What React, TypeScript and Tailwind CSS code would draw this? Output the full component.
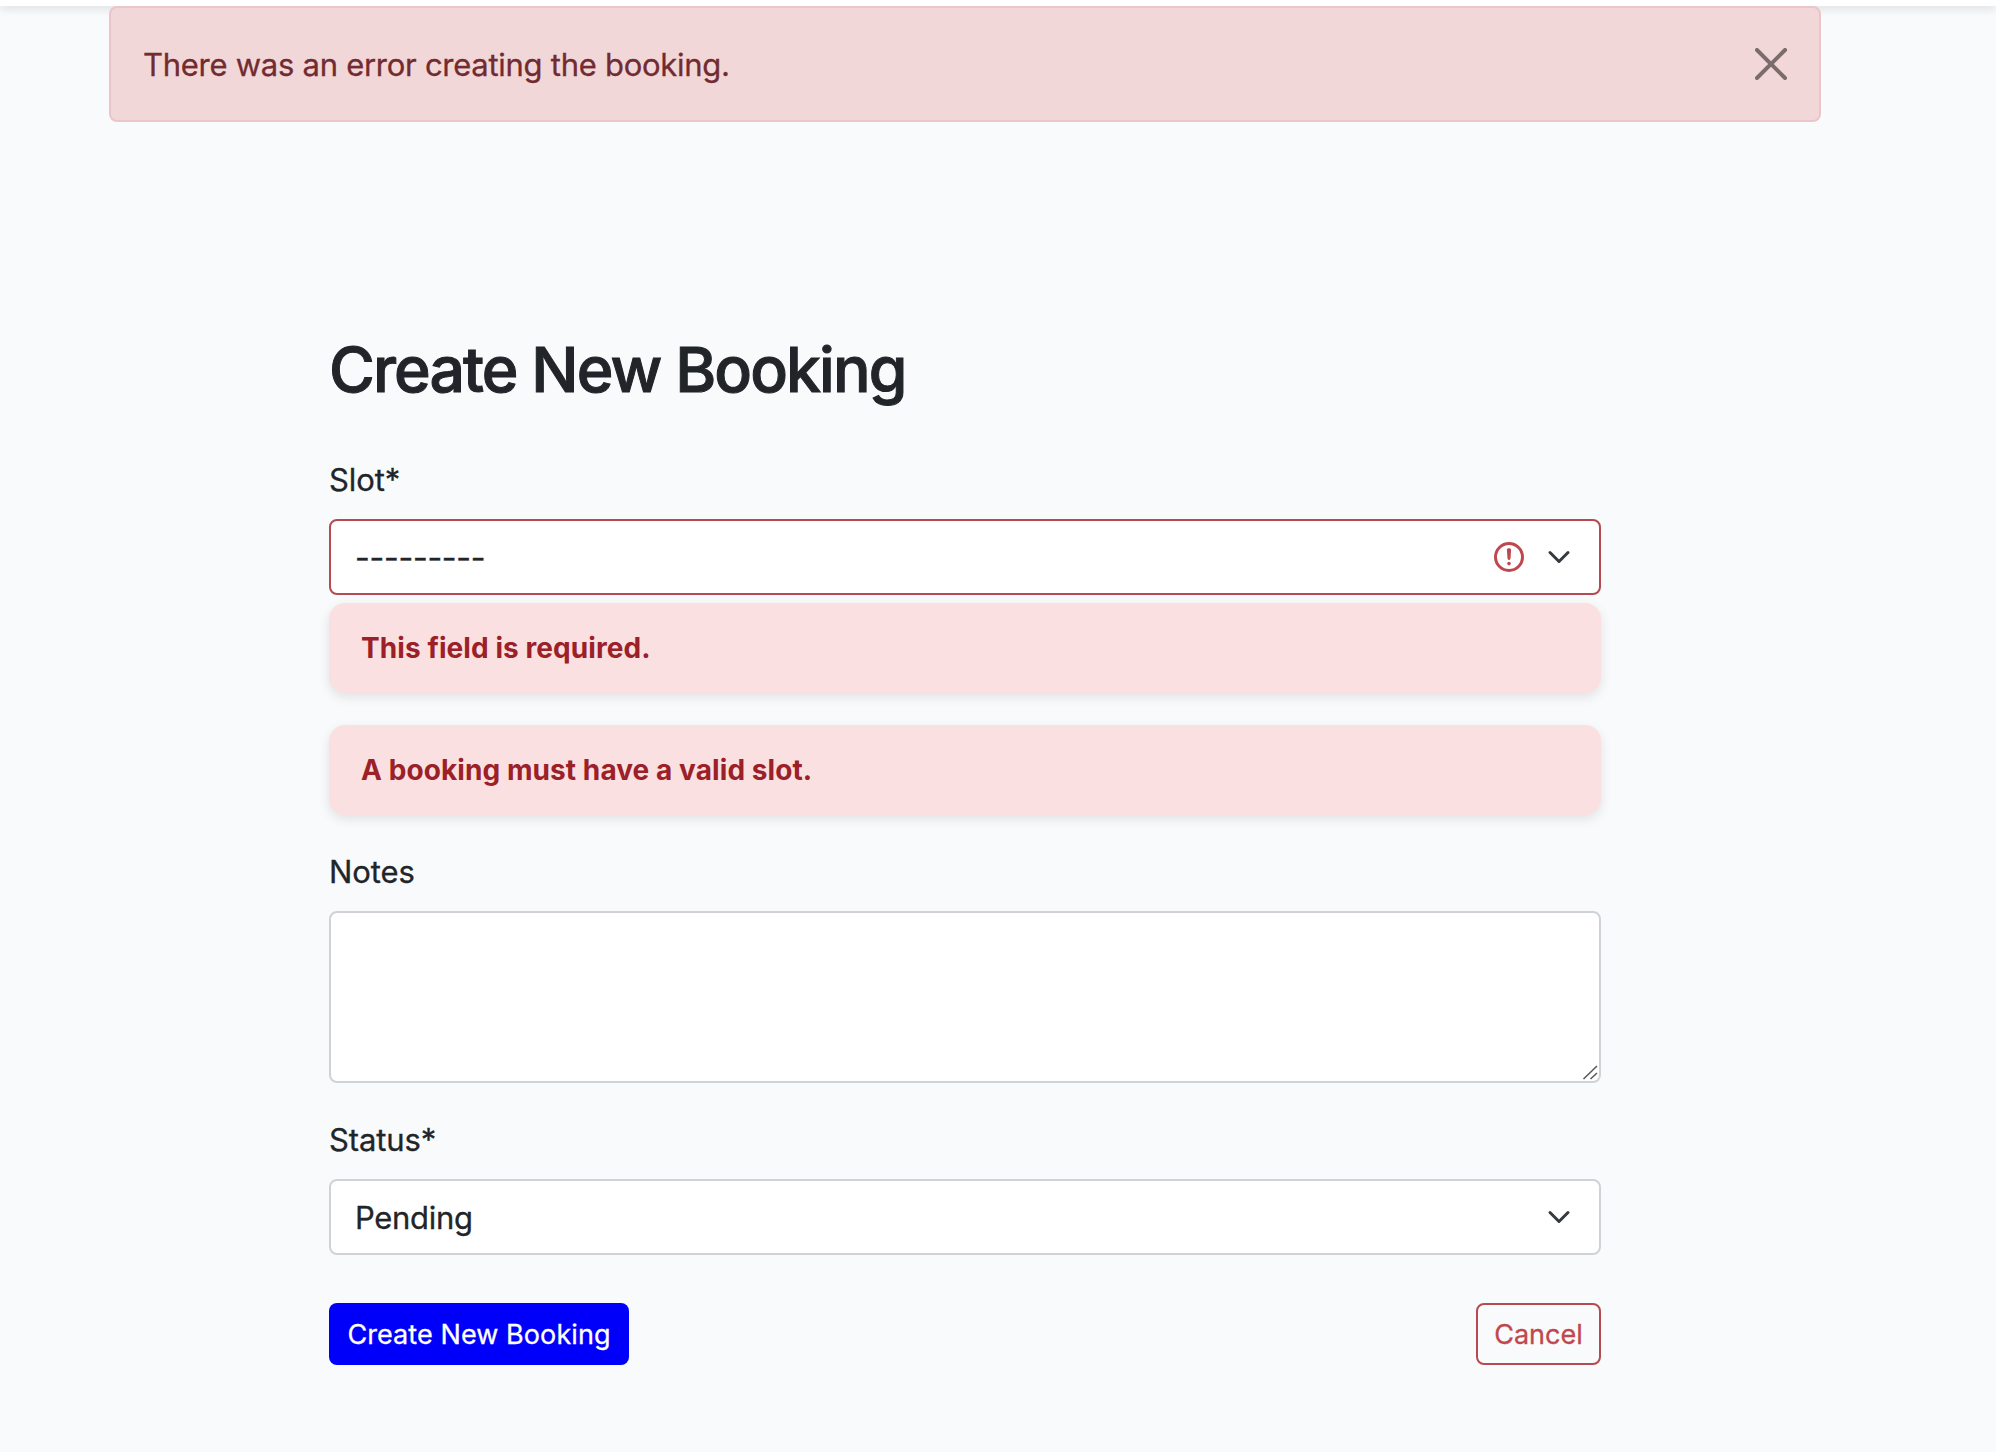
import React from "react";

const Chevron = () => (
  <svg className="h-6 w-8 shrink-0" viewBox="0 0 16 16" fill="none">
    <path d="m2 5 6 6 6-6" stroke="#343a40" strokeWidth="2" strokeLinecap="round" strokeLinejoin="round" />
  </svg>
);

const InvalidIcon = () => (
  <svg className="mr-4 h-9 w-9 shrink-0" viewBox="0 0 12 12" fill="none" stroke="#c0474d">
    <circle cx="6" cy="6" r="4.5" />
    <path strokeLinejoin="round" d="M5.8 3.6h.4L6 6.5z" />
    <circle cx="6" cy="8.2" r=".6" fill="#c0474d" stroke="none" />
  </svg>
);

const Label = ({ children }: { children: React.ReactNode }) => (
  <div className="mb-4 flex h-12 leading-[50px] tracking-[-0.12px]">
    <span className="[-webkit-text-stroke:0.3px]">{children}</span>
  </div>
);

const ErrorBox = ({ children }: { children: React.ReactNode }) => (
  <div className="mb-8 flex h-[90px] items-center rounded-2xl bg-[#fae0e1] px-8 text-[28px] font-bold leading-[44px] tracking-[0.08px] text-[#9b2028] shadow-[0_4px_12px_rgba(0,0,0,0.1)]">
    <span>{children}</span>
  </div>
);

export default function App() {
  return (
    <div className="h-[1452px] w-[1996px] overflow-hidden bg-[#f9fafc] font-['Inter',sans-serif] text-[31px] leading-[48px] text-[#212529]">
      <nav className="h-1.5 bg-white shadow-[0_2px_10px_rgba(0,0,0,0.15)]" />
      <div
        role="alert"
        className="relative ml-[109px] flex h-[116px] w-[1712px] items-center justify-between rounded-lg border-2 border-[#ebc5c9] bg-[#f2d7d9] px-8 text-[#722b30]"
      >
        <span className="pt-0.5 tracking-[-0.27px] [-webkit-text-stroke:0.3px]">
          There was an error creating the booking.
        </span>
        <button type="button" aria-label="Close" className="text-[#7b6b6d]">
          <svg className="h-8 w-8" viewBox="0 0 16 16" fill="currentColor">
            <path d="M.293.293a1 1 0 0 1 1.414 0L8 6.586 14.293.293a1 1 0 1 1 1.414 1.414L9.414 8l6.293 6.293a1 1 0 0 1-1.414 1.414L8 9.414l-6.293 6.293a1 1 0 0 1-1.414-1.414L6.586 8 .293 1.707a1 1 0 0 1 0-1.414z" />
          </svg>
        </button>
      </div>

      <form className="ml-[329px] mt-[208px] w-[1272px]">
        <h2 className="mb-12 h-[77px] text-[62.5px] font-medium leading-[79px] tracking-[-1.9px] [-webkit-text-stroke:1px]">
          <span>Create New Booking</span>
        </h2>

        <Label>Slot*</Label>
        <div className="mb-2 flex h-[76px] items-center rounded-lg border-2 border-[#b54a50] bg-white px-6">
          <span className="flex-1 pt-0.5 text-[32px] tracking-[-0.24px] [-webkit-text-stroke:0.4px]">---------</span>
          <InvalidIcon />
          <Chevron />
        </div>
        <ErrorBox>This field is required.</ErrorBox>
        <ErrorBox>A booking must have a valid slot.</ErrorBox>

        <Label>Notes</Label>
        <div className="mb-8 flex h-[172px] items-end justify-end rounded-lg border-2 border-[#cfd3d8] bg-white">
          <svg className="h-5 w-5" viewBox="0 0 20 20" stroke="#5c5c5c" strokeWidth="1.6" fill="none">
            <path d="M4.500 18L18 5M11.500 18L18 12" />
          </svg>
        </div>

        <Label>Status*</Label>
        <div className="mb-12 flex h-[76px] items-center rounded-lg border-2 border-[#cfd3d8] bg-white px-6">
          <span className="flex-1 pt-0.5 tracking-[-0.3px] [-webkit-text-stroke:0.3px]">Pending</span>
          <Chevron />
        </div>

        <div className="flex justify-between text-[27px] leading-[42px] [-webkit-text-stroke:0.3px]">
          <button type="button" className="flex h-[62px] w-[300px] items-center justify-center rounded-lg bg-[#0000fa] pt-px tracking-[0.08px] text-white">
            <span>Create New Booking</span>
          </button>
          <button type="button" className="flex h-[62px] w-[125px] items-center justify-center rounded-lg border-2 border-[#b54a50] pt-px text-[#c0474d]">
            <span>Cancel</span>
          </button>
        </div>
      </form>
    </div>
  );
}
